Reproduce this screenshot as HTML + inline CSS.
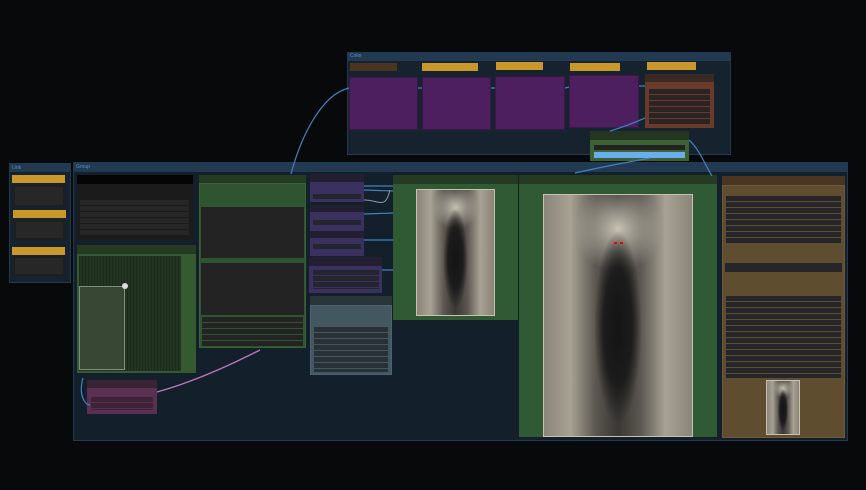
<!DOCTYPE html>
<html><head><meta charset="utf-8"><style>
*{margin:0;padding:0;box-sizing:border-box}
body{width:866px;height:490px;background:#08090b;position:relative;overflow:hidden;font-family:"Liberation Sans",sans-serif}
div{position:absolute}
.t{font-size:5px;color:#5a8fc0;left:3px;top:2px}
.img{background:radial-gradient(ellipse 16% 40% at 50% 55%,#141414 0%,#1c1c1c 60%,rgba(30,30,30,0) 100%),radial-gradient(ellipse 30% 18% at 50% 14%,#c8c2b4 0%,rgba(200,195,180,0) 100%),linear-gradient(90deg,#8a857a 0%,#a8a294 18%,#5a5650 35%,#3a3834 50%,#5a5650 65%,#a8a294 82%,#8a857a 100%);border:1px solid #c8c0b0}
</style></head><body>

<!-- Color group -->
<div style="left:347px;top:52px;width:384px;height:103px;background:#16232f;border:1px solid #223a50"></div>
<div style="left:347px;top:52px;width:384px;height:9px;background:#213a52"><span class="t" style="position:absolute;top:1px">Color</span></div>
<div style="left:350px;top:63px;width:47px;height:8px;background:#4a3422"></div>
<div style="left:422px;top:63px;width:56px;height:8px;background:#c9972b"></div>
<div style="left:496px;top:62px;width:47px;height:8px;background:#c9972b"></div>
<div style="left:570px;top:63px;width:50px;height:8px;background:#c9972b"></div>
<div style="left:647px;top:62px;width:49px;height:8px;background:#c9972b"></div>
<div style="left:349px;top:77px;width:69px;height:53px;background:#4e1f5e;border:1px solid #3a1848"></div>
<div style="left:422px;top:77px;width:69px;height:53px;background:#4e1f5e;border:1px solid #3a1848"></div>
<div style="left:495px;top:76px;width:70px;height:54px;background:#4e1f5e;border:1px solid #3a1848"></div>
<div style="left:569px;top:75px;width:70px;height:53px;background:#4e1f5e;border:1px solid #3a1848"></div>
<div style="left:645px;top:74px;width:69px;height:8px;background:#3a2a24"></div>
<div style="left:645px;top:82px;width:69px;height:46px;background:#6a3a2a"></div>
<div style="left:649px;top:89px;width:61px;height:35px;background:repeating-linear-gradient(#2a2424 0 5px,#6a3a2a 5px 6px)"></div>
<div style="left:590px;top:131px;width:99px;height:9px;background:#263522"></div>
<div style="left:590px;top:140px;width:99px;height:21px;background:#3a6234"></div>
<div style="left:594px;top:145px;width:91px;height:5px;background:#222"></div>
<div style="left:594px;top:152px;width:91px;height:6px;background:#6aaeee"></div>

<!-- Link group -->
<div style="left:9px;top:163px;width:62px;height:120px;background:#16232f;border:1px solid #223a50"></div>
<div style="left:9px;top:163px;width:62px;height:9px;background:#213a52"><span class="t" style="position:absolute">Link</span></div>
<div style="left:12px;top:175px;width:53px;height:8px;background:#c9972b"></div>
<div style="left:13px;top:185px;width:52px;height:22px;background:#272727;border:2px solid #1e1e1e"></div>
<div style="left:13px;top:210px;width:53px;height:8px;background:#c9972b"></div>
<div style="left:14px;top:220px;width:51px;height:20px;background:#272727;border:2px solid #1e1e1e"></div>
<div style="left:12px;top:247px;width:53px;height:8px;background:#c9972b"></div>
<div style="left:13px;top:256px;width:52px;height:20px;background:#272727;border:2px solid #1e1e1e"></div>

<!-- Main group -->
<div style="left:73px;top:162px;width:775px;height:279px;background:#131f2b;border:1px solid #223a50"></div>
<div style="left:73px;top:162px;width:775px;height:10px;background:#213a52"><span class="t" style="position:absolute;top:2px">Group</span></div>

<div style="left:77px;top:175px;width:116px;height:9px;background:#050505"></div>
<div style="left:77px;top:184px;width:116px;height:56px;background:#1b1b1b"></div>
<div style="left:80px;top:200px;width:109px;height:36px;background:repeating-linear-gradient(#262626 0 5px,#1b1b1b 5px 6px)"></div>

<div style="left:77px;top:245px;width:119px;height:9px;background:#253a22"></div>
<div style="left:77px;top:254px;width:119px;height:119px;background:#355a30"></div>
<div style="left:79px;top:256px;width:102px;height:115px;background:repeating-linear-gradient(90deg,#1c2a1a 0 1px,#243422 1px 3px),#1c2a1a"></div>
<div style="left:79px;top:286px;width:46px;height:84px;background:#3a4a36;border:1px solid #8a9886;opacity:.9"></div>
<div style="left:122px;top:283px;width:6px;height:6px;border-radius:50%;background:#ddd"></div>

<div style="left:87px;top:380px;width:70px;height:8px;background:#3a2335"></div>
<div style="left:87px;top:388px;width:70px;height:26px;background:#5a3050"></div>
<div style="left:91px;top:397px;width:62px;height:13px;background:repeating-linear-gradient(#3e2238 0 5px,#5a3050 5px 6px)"></div>

<div style="left:199px;top:175px;width:107px;height:8px;background:#243a22"></div>
<div style="left:199px;top:183px;width:107px;height:165px;background:#2f5530;border:1px solid #3a6236"></div>
<div style="left:201px;top:207px;width:103px;height:51px;background:#232323"></div>
<div style="left:201px;top:263px;width:103px;height:52px;background:#232323"></div>
<div style="left:202px;top:317px;width:101px;height:30px;background:repeating-linear-gradient(#232323 0 5px,#2f5530 5px 6px)"></div>

<div style="left:310px;top:174px;width:54px;height:8px;background:#241f30"></div>
<div style="left:310px;top:182px;width:54px;height:20px;background:#3b3160"></div>
<div style="left:313px;top:194px;width:48px;height:5px;background:#252530"></div>
<div style="left:310px;top:205px;width:54px;height:7px;background:#241f30"></div>
<div style="left:310px;top:212px;width:54px;height:19px;background:#3b3160"></div>
<div style="left:313px;top:220px;width:48px;height:5px;background:#252530"></div>
<div style="left:310px;top:231px;width:54px;height:7px;background:#241f30"></div>
<div style="left:310px;top:238px;width:54px;height:18px;background:#3b3160"></div>
<div style="left:313px;top:244px;width:48px;height:5px;background:#252530"></div>
<div style="left:309px;top:257px;width:73px;height:9px;background:#241f30"></div>
<div style="left:309px;top:266px;width:73px;height:27px;background:#3b3160"></div>
<div style="left:313px;top:270px;width:66px;height:19px;background:repeating-linear-gradient(#252530 0 5px,#3b3160 5px 6px)"></div>

<div style="left:310px;top:296px;width:82px;height:9px;background:#2a353a"></div>
<div style="left:310px;top:305px;width:82px;height:70px;background:#435760;border:1px solid #4f646c"></div>
<div style="left:314px;top:327px;width:74px;height:45px;background:repeating-linear-gradient(#2a3136 0 5px,#435760 5px 6px)"></div>

<div style="left:393px;top:175px;width:125px;height:9px;background:#243a22"></div>
<div style="left:393px;top:184px;width:125px;height:136px;background:#2f5a33"></div>
<div class="img" style="left:416px;top:189px;width:79px;height:127px"></div>

<div style="left:519px;top:175px;width:198px;height:9px;background:#243a22"></div>
<div style="left:519px;top:184px;width:198px;height:253px;background:#2f5a33"></div>
<div class="img" style="left:543px;top:194px;width:150px;height:243px"></div>
<div style="left:614px;top:242px;width:3px;height:2px;background:#f00"></div>
<div style="left:620px;top:242px;width:3px;height:2px;background:#f00"></div>

<div style="left:722px;top:176px;width:123px;height:9px;background:#4a3422"></div>
<div style="left:722px;top:185px;width:123px;height:253px;background:#5f4d30;border:1px solid #6e5a38"></div>
<div style="left:726px;top:196px;width:115px;height:48px;background:repeating-linear-gradient(#25252a 0 5px,#5f4d30 5px 6px)"></div>
<div style="left:725px;top:263px;width:117px;height:9px;background:#25252a"></div>
<div style="left:726px;top:296px;width:115px;height:82px;background:repeating-linear-gradient(#25252a 0 5px,#5f4d30 5px 6px)"></div>
<div class="img" style="left:766px;top:380px;width:34px;height:55px"></div>

<svg width="866" height="490" style="position:absolute;left:0;top:0" fill="none">
<g stroke="#3f82c0" stroke-width="1.2">
<path d="M291 174 C300 140 320 95 349 88"/>
<path d="M418 88 L422 88 M491 88 L495 88 M565 88 L569 87 M639 86 L645 86"/>
<path d="M610 131 C630 125 640 120 645 118"/>
<path d="M689 140 C700 150 705 165 712 176"/>
<path d="M575 173 C610 165 630 162 650 158"/>
<path d="M364 186 L393 186 M364 190 L393 191 M364 214 L393 213 M364 240 L393 240 M382 270 L393 270"/>
<path d="M83 378 C78 395 85 405 90 405"/>
</g>
<path d="M157 392 C200 380 240 360 260 350" stroke="#c078c0" stroke-width="1.3"/>
<path d="M364 200 C380 200 385 210 390 190" stroke="#8a9a9a" stroke-width="1"/>
</svg>
</body></html>
